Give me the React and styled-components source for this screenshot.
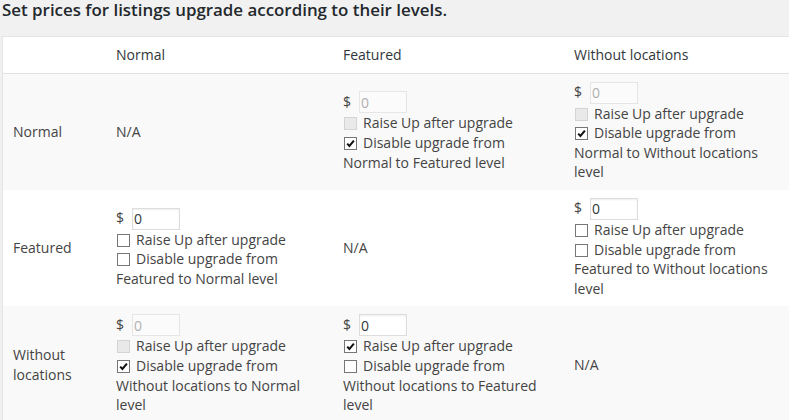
import React from "react";
import styled, { createGlobalStyle } from "styled-components";

const GlobalStyle = createGlobalStyle`
  html, body { margin: 0; padding: 0; overflow: hidden; }
  body {
    background: #f1f1f1;
    font-family: "Open Sans", "Liberation Sans", sans-serif;
    font-size: 14px;
    color: #444;
  }
  *, *::before, *::after { box-sizing: border-box; }
`;

const Page = styled.div`
  padding: 0 0 0 2px;
`;

const Title = styled.h3`
  margin: 0 0 16px;
  font-size: 16.9px;
  line-height: 20px;
  font-weight: 600;
  color: #23282d;
`;

const Table = styled.table`
  width: 792px;
  table-layout: fixed;
  border-collapse: separate;
  border-spacing: 0;
  background: #fff;
  border: 1px solid #e5e5e5;
  box-shadow: 0 1px 1px rgba(0, 0, 0, 0.04);
`;

const HeadCell = styled.th`
  width: ${(p) => (p.$w ? `${p.$w}px` : "auto")};
  padding: 8px 10px;
  text-align: left;
  font-weight: 400;
  line-height: 1.4;
  color: #32373c;
  border-bottom: 1px solid #e1e1e1;
`;

const Row = styled.tr`
  background: ${(p) => (p.$alt ? "#f9f9f9" : "#fff")};
`;

const Cell = styled.td`
  padding: 8px 10px;
  vertical-align: middle;
  line-height: 1.4;
  color: #444;
`;

const PriceRow = styled.div`
  display: flex;
  align-items: center;
  gap: 8px;
  height: 22px;
`;

const Dollar = styled.span`
  position: relative;
  top: -1px;
`;

const PriceInput = styled.input`
  width: 48px;
  height: 22px;
  margin: 0;
  padding: 0 1px;
  font-family: inherit;
  font-size: 14px;
  border: 1px solid ${(p) => (p.disabled ? "#e6e6e6" : "#ddd")};
  background: ${(p) => (p.disabled ? "#fbfbfb" : "#fff")};
  color: ${(p) => (p.disabled ? "#b0b0b0" : "#32373c")};
  box-shadow: ${(p) => (p.disabled ? "none" : "inset 0 1px 2px rgba(0,0,0,.07)")};
  outline: none;
`;

const OptionLine = styled.label`
  display: block;
`;

const Box = styled.span`
  display: inline-block;
  width: 13px;
  height: 13px;
  margin: 0 6px 0 1px;
  vertical-align: -2px;
  border: 1px solid ${(p) => (p.$disabled ? "#d4d4d4" : "#767676")};
  background: ${(p) => (p.$disabled ? "#e9e9e9" : "#fff")};
  position: relative;
  svg {
    position: absolute;
    left: 0;
    top: 0;
  }
`;

const Check = ({ checked, disabled }) => (
  <Box $disabled={disabled}>
    {checked && (
      <svg width="11" height="11" viewBox="0 0 11 11">
        <path
          d="M2.2 5.6 L4.4 7.9 L8.9 2.6"
          fill="none"
          stroke="#111"
          strokeWidth="2"
        />
      </svg>
    )}
  </Box>
);

const levels = ["Normal", "Featured", "Without locations"];

const data = {
  "Normal|Featured": { price: true, disabled: true, raise: false, block: true },
  "Normal|Without locations": { disabled: true, raise: false, block: true },
  "Featured|Normal": { disabled: false, raise: false, block: false },
  "Featured|Without locations": { disabled: false, raise: false, block: false },
  "Without locations|Normal": { disabled: true, raise: false, block: true },
  "Without locations|Featured": { disabled: false, raise: true, block: false },
};

const Upgrade = ({ from, to, cfg }) => (
  <>
    <PriceRow>
      <Dollar>$</Dollar>
      <PriceInput defaultValue="0" disabled={cfg.disabled} />
    </PriceRow>
    <OptionLine>
      <Check checked={cfg.raise} disabled={cfg.disabled} />
      Raise Up after upgrade
    </OptionLine>
    <OptionLine>
      <Check checked={cfg.block} />
      Disable upgrade from {from} to {to} level
    </OptionLine>
  </>
);

export default function App() {
  return (
    <>
      <GlobalStyle />
      <Page>
        <Title>Set prices for listings upgrade according to their levels.</Title>
        <Table>
          <thead>
            <tr>
              <HeadCell $w={103} />
              <HeadCell $w={227}>Normal</HeadCell>
              <HeadCell $w={231}>Featured</HeadCell>
              <HeadCell>Without locations</HeadCell>
            </tr>
          </thead>
          <tbody>
            {levels.map((from, i) => (
              <Row key={from} $alt={i % 2 === 0}>
                <Cell>{from}</Cell>
                {levels.map((to) => (
                  <Cell key={to}>
                    {from === to ? (
                      "N/A"
                    ) : (
                      <Upgrade from={from} to={to} cfg={data[`${from}|${to}`]} />
                    )}
                  </Cell>
                ))}
              </Row>
            ))}
          </tbody>
        </Table>
      </Page>
    </>
  );
}
